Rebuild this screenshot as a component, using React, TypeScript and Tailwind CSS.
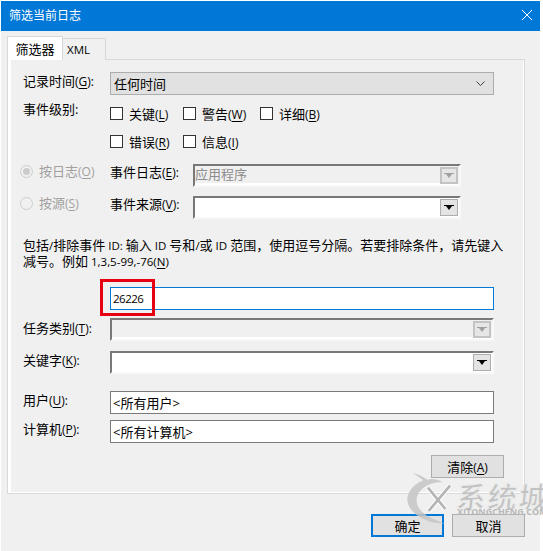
import React from "react";

const FONT = '"Open Sans", "Noto Sans CJK SC", sans-serif';

function L({ children }: { children: React.ReactNode }) {
  return <span className="text-[11.5px] leading-none">{children}</span>;
}

function Mn({ pre, k, post = "" }: { pre: string; k: string; post?: string }) {
  return (
    <span>
      {pre}
      <span className="text-[12px] leading-none">
        (<span className="underline underline-offset-2">{k}</span>){post}
      </span>
    </span>
  );
}

function Check({ label, w }: { label: React.ReactNode; w: string }) {
  return (
    <div className={`flex items-center ${w}`}>
      <span className="w-[13px] h-[13px] border border-[#333333] bg-white shrink-0" />
      <span className="ml-[6px] whitespace-nowrap">{label}</span>
    </div>
  );
}

function Radio({ checked, label }: { checked?: boolean; label: React.ReactNode }) {
  return (
    <div className="flex items-center w-[99px] pl-[9px] text-[#a0a0a0] mb-[9px] shrink-0">
      <span className="w-[13px] h-[13px] rounded-full border border-[#cccccc] flex items-center justify-center shrink-0">
        {checked && <span className="w-[7px] h-[7px] rounded-full bg-[#cccccc]" />}
      </span>
      <span className="ml-[6px] whitespace-nowrap">{label}</span>
    </div>
  );
}

function DropBtn({ disabled }: { disabled?: boolean }) {
  return (
    <span
      className={
        disabled
          ? "w-[18px] h-[17px] border-2 border-[#c4c4c4] bg-[#e6e6e6] flex items-center justify-center shrink-0"
          : "w-[18px] h-[17px] border border-[#adadad] bg-[#e4e4e4] flex items-center justify-center shrink-0"
      }
    >
      <svg width="10" height="6" viewBox="0 0 10 6">
        <polygon points="0,0 10,0 10,1 8,1 5,5 2,1 0,1" fill={disabled ? "#a0a0a0" : "#000000"} />
      </svg>
    </span>
  );
}

function Sunken({ w, disabled, text }: { w: string; disabled?: boolean; text?: string }) {
  return (
    <div className={`${w} h-[23px] border-t-2 border-l-2 border-t-[#787878] border-l-[#787878] border-r-2 border-b-2 border-r-[#f8f8f8] border-b-[#f8f8f8] flex justify-end items-start shrink-0 relative ${disabled ? "bg-[#f0f0f0]" : "bg-white"}`}>
      {disabled && <span className="absolute left-0 right-0 bottom-0 h-[2px] bg-white" />}
      {text && <span className="absolute left-0 top-[-1px] text-[#8c8c8c]">{text}</span>}
      <span className="mt-px mr-px relative">
        <DropBtn disabled={disabled} />
      </span>
    </div>
  );
}

function TextBox({ children, focus }: { children: React.ReactNode; focus?: boolean }) {
  return (
    <div
      className={`w-[384px] h-[23px] bg-white border pl-[2px] flex items-center shrink-0 ${
        focus ? "border-[#0078d7]" : "border-[#7a7a7a]"
      }`}
    >
      {children}
    </div>
  );
}

function Row({ label, mt, children, lift = "mb-[5px]" }: { label?: React.ReactNode; mt: string; children: React.ReactNode; lift?: string }) {
  return (
    <div className={`flex items-center h-[23px] pl-[12px] ${mt}`}>
      <div className={`w-[87px] h-[18px] shrink-0 whitespace-nowrap ${lift}`}>{label}</div>
      {children}
    </div>
  );
}

function Btn({ children, focus }: { children: React.ReactNode; focus?: boolean }) {
  return (
    <div
      className={`w-[73px] h-[23px] flex items-center justify-center bg-[#e1e1e1] ${
        focus ? "border-2 border-[#0078d7]" : "border border-[#adadad]"
      }`}
    >
      {children}
    </div>
  );
}

export default function App() {
  return (
    <div
      className="w-[543px] h-[551px] bg-white overflow-hidden relative text-[13px] leading-[18px] text-black"
      style={{ fontFamily: FONT }}
    >
      <div className="mt-px ml-px w-[539px] h-[550px] bg-[#f0f0f0] flex flex-col">
        {/* Title bar */}
        <div className="h-[30px] bg-[#0078d7] flex items-center justify-between pl-[8px] pr-[6px] text-white text-[12px] shrink-0">
          <span className="-mt-px">筛选当前日志</span>
          <svg width="12" height="12" viewBox="0 0 12 12" className="-mt-[2px] mr-[1px]">
            <path d="M1 1 L11 11 M11 1 L1 11" stroke="#ffffff" strokeWidth="1" fill="none" />
          </svg>
        </div>

        {/* Tabs */}
        <div className="flex items-end ml-[6px] mt-[6px] h-[23px] relative z-10 -mb-px">
          <div className="w-[56px] h-[24px] bg-white border border-b-0 border-[#d9d9d9] flex items-center justify-center">
            筛选器
          </div>
          <div className="w-[44px] h-[22px] -ml-px bg-[#f0f0f0] border border-b-0 border-[#d9d9d9] flex items-center pl-[4px] text-[11.5px]">
            XML
          </div>
        </div>

        {/* Panel */}
        <div className="ml-[6px] w-[518px] h-[435px] border border-[#d9d9d9] shrink-0">
          <div className="h-full border-l-[3px] border-r border-b border-white flex flex-col">
            <Row label={<Mn pre="记录时间" k="G" post=":" />} mt="mt-[12px]">
              <div className="w-[384px] h-[23px] border border-[#adadad] bg-[#e1e1e1] flex items-center justify-between pl-[3px] pr-[8px]">
                <span>任何时间</span>
                <svg width="9" height="6" viewBox="0 0 9 6">
                  <path d="M0.5 0.5 L4.5 4.5 L8.5 0.5" stroke="#404040" strokeWidth="1" fill="none" />
                </svg>
              </div>
            </Row>

            <div className="flex items-center pl-[12px] mt-[12px] h-[13px]">
              <div className="w-[87px] shrink-0 mb-[9px]">事件级别:</div>
              <Check w="w-[73px]" label={<Mn pre="关键" k="L" />} />
              <Check w="w-[77px]" label={<Mn pre="警告" k="W" />} />
              <Check w="w-[70px]" label={<Mn pre="详细" k="B" />} />
            </div>

            <div className="flex items-center pl-[99px] mt-[15px] h-[13px]">
              <Check w="w-[73px]" label={<Mn pre="错误" k="R" />} />
              <Check w="w-[70px]" label={<Mn pre="信息" k="I" />} />
            </div>

            <div className="flex items-center mt-[16px] h-[23px]">
              <Radio checked label={<Mn pre="按日志" k="O" />} />
              <div className="w-[83px] h-[18px] shrink-0 whitespace-nowrap mb-[7px]">
                <Mn pre="事件日志" k="E" post=":" />
              </div>
              <Sunken w="w-[268px]" disabled text="应用程序" />
            </div>

            <div className="flex items-center mt-[9px] h-[23px]">
              <Radio label={<Mn pre="按源" k="S" />} />
              <div className="w-[83px] h-[18px] shrink-0 whitespace-nowrap mb-[7px]">
                <Mn pre="事件来源" k="V" post=":" />
              </div>
              <Sunken w="w-[268px]" />
            </div>

            <p className="pl-[12px] mt-[18px] leading-[16px] h-[32px] whitespace-nowrap">
              包括<L>/</L>排除事件<L> ID: </L>输入<L> ID </L>号和<L>/</L>或<L> ID </L>范围，使用逗号分隔。若要排除条件，请先键入
              <br />
              减号。例如<L> 1,3,5-99,-76(<span className="underline underline-offset-2">N</span>)</L>
            </p>

            <Row mt="mt-[18px]">
              <TextBox focus>
                <span className="text-[11.5px] tracking-[-0.5px]">26226</span>
              </TextBox>
            </Row>

            <Row label={<Mn pre="任务类别" k="T" post=":" />} mt="mt-[8px]" lift="mb-[4px]">
              <Sunken w="w-[384px]" disabled />
            </Row>

            <Row label={<Mn pre="关键字" k="K" post=":" />} mt="mt-[10px]">
              <Sunken w="w-[384px]" />
            </Row>

            <Row label={<Mn pre="用户" k="U" post=":" />} mt="mt-[17px]">
              <TextBox>&lt;所有用户&gt;</TextBox>
            </Row>

            <Row label={<Mn pre="计算机" k="P" post=":" />} mt="mt-[6px]">
              <TextBox>&lt;所有计算机&gt;</TextBox>
            </Row>

            <div className="flex justify-end pr-[19px] mt-[12px]">
              <Btn>
                <Mn pre="清除" k="A" />
              </Btn>
            </div>
          </div>
        </div>

        {/* Footer */}
        <div className="flex justify-end gap-[8px] mt-[20px] pr-[15px]">
          <Btn focus>确定</Btn>
          <Btn>取消</Btn>
        </div>
      </div>

      {/* Red highlight */}
      <div className="absolute left-[100px] top-[279px] w-[55px] h-[37px] border-[3px] border-[#e60012]" />

      {/* Watermark */}
      <svg className="absolute left-[400px] top-[465px]" width="143" height="86" viewBox="0 0 429 258">
        <path
          d="M38 24 C55 28 68 34 82 44 C96 40 112 42 128 52 C90 50 52 72 50 104 C48 140 92 162 136 176 C78 176 26 146 22 106 C20 84 38 60 70 46 C60 38 50 32 38 24 Z"
          fill="#c4c4c4"
          fillOpacity="0.85"
        />
        <path d="M84 68 L136 132 M150 62 L86 138" stroke="#ffffff" strokeWidth="14" strokeOpacity="0.85" fill="none" />
        <path d="M84 68 L136 132 M150 62 L86 138" stroke="#b4b4b4" strokeWidth="8" fill="none" />
      </svg>
      <div className="absolute left-[457px] top-[481px] whitespace-nowrap font-bold text-[29px] leading-[32px] tracking-[2px] text-[#c2c2c2] [-webkit-text-stroke:1px_#ececec] -skew-x-6 origin-left">
        系统城
      </div>
      <div className="absolute left-[457px] top-[507px] whitespace-nowrap text-[9px] leading-[9px] font-bold text-[#b8b8b8]">
        XITONGCHENG.COM
      </div>
    </div>
  );
}
